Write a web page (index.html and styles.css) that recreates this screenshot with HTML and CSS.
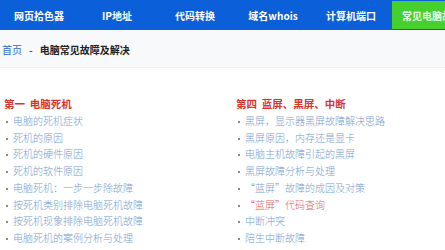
FILE: index.html
```html
<!DOCTYPE html>
<html lang="zh-CN">
<head>
<meta charset="utf-8">
<title>电脑常见故障及解决</title>
<link rel="stylesheet" href="styles.css">
</head>
<body>
<nav class="nav">
  <a class="nav-item">网页拾色器</a>
  <a class="nav-item">IP地址</a>
  <a class="nav-item">代码转换</a>
  <a class="nav-item">域名whois</a>
  <a class="nav-item">计算机端口</a>
  <a class="nav-item nav-active">常见电脑故障</a>
</nav>
<div class="crumb">
  <a class="crumb-link">首页</a><span class="crumb-sep">-</span><span class="crumb-title">电脑常见故障及解决</span>
</div>
<main class="content">
  <section class="col">
    <h2 class="col-title">第一&nbsp;&nbsp;电脑死机</h2>
    <ul class="list">
      <li>电脑的死机症状</li>
      <li>死机的原因</li>
      <li>死机的硬件原因</li>
      <li>死机的软件原因</li>
      <li>电脑死机：一步一步除故障</li>
      <li>按死机类别排除电脑死机故障</li>
      <li>按死机现象排除电脑死机故障</li>
      <li>电脑死机的案例分析与处理</li>
    </ul>
  </section>
  <section class="col">
    <h2 class="col-title">第四&nbsp;&nbsp;蓝屏、黑屏、中断</h2>
    <ul class="list">
      <li>黑屏，显示器黑屏故障解决思路</li>
      <li>黑屏原因，内存还是显卡</li>
      <li>电脑主机故障引起的黑屏</li>
      <li>黑屏故障分析与处理</li>
      <li>“蓝屏”故障的成因及对策</li>
      <li class="hot">“蓝屏”代码查询</li>
      <li>中断冲突</li>
      <li>陪生中断故障</li>
    </ul>
  </section>
</main>
</body>
</html>
```

FILE: styles.css
```css
html, body {
  margin: 0;
  padding: 0;
  background: #ffffff;
  font-family: "Noto Sans CJK SC", "Noto Sans", sans-serif;
  overflow: hidden;
}

.nav {
  display: flex;
  height: 30px;
  background: #0b5fd8;
  white-space: nowrap;
}

.nav-item {
  flex: 0 0 78px;
  display: flex;
  align-items: center;
  justify-content: center;
  color: #ffffff;
  font-size: 10px;
  font-weight: bold;
}

.nav-active {
  flex: 0 0 auto;
  justify-content: flex-start;
  margin: 1px 0 1px 2px;
  padding: 0 10px;
  background: #46d02e;
  color: #e8ffe0;
}

.crumb {
  height: 36px;
  margin-top: 1px;
  display: flex;
  align-items: center;
  padding-left: 2px;
  background: #f7f9fb;
  border-bottom: 1px solid #eef0f3;
  font-size: 10px;
}

.crumb-link {
  color: #2f6bc8;
}

.crumb-sep {
  margin: 0 7px;
  color: #555;
  font-weight: bold;
}

.crumb-title {
  color: #222;
  font-weight: bold;
}

.content {
  display: grid;
  grid-template-columns: 232px 232px;
  padding-top: 27px;
}

.col-title {
  margin: 0 0 1px 0;
  padding-left: 4px;
  font-size: 10.5px;
  line-height: 17px;
  font-weight: bold;
  color: #d8352f;
}

.list {
  list-style: none;
  margin: 0;
  padding: 0;
}

.list li {
  position: relative;
  padding-left: 13px;
  font-size: 10px;
  line-height: 16.7px;
  font-weight: 300;
  color: #7a9bcd;
  white-space: nowrap;
}

.list li::before {
  content: "";
  position: absolute;
  left: 6px;
  top: 8px;
  width: 2px;
  height: 2px;
  background: #8a8a8a;
}

.list li.hot {
  color: #e0605a;
}
```
